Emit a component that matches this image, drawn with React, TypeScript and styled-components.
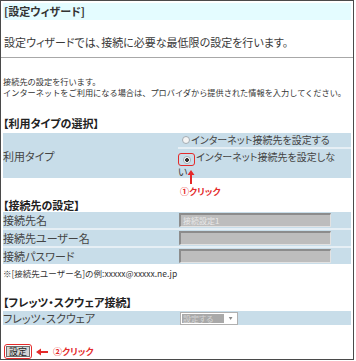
import styled, { createGlobalStyle } from "styled-components";

const GlobalStyle = createGlobalStyle`
  html, body {
    margin: 0;
    padding: 0;
    background: #fff;
  }
  body {
    font-family: "Noto Sans CJK JP", "Noto Sans", sans-serif;
    font-feature-settings: "palt";
    color: #3a3a3a;
  }
`;

const Frame = styled.div`
  position: relative;
  width: 354px;
  height: 360px;
  box-sizing: border-box;
  border: 1px solid #4a4a4a;
  padding: 2px 2px 0 2px;
  overflow: hidden;
`;

const TitleBar = styled.div`
  height: 17px;
  line-height: 17px;
  background: #e4fcff;
  font-size: 11px;
  font-weight: bold;
  color: #333;
  padding-left: 1px;
`;

const Lead = styled.p`
  margin: 15px 0 0;
  font-size: 11px;
  line-height: 14px;
  padding-left: 1px;
`;

const Rule = styled.hr`
  margin: 8px -2px 0;
  border: 0;
  height: 1px;
  background: #a8a8a8;
`;

const Intro = styled.p`
  margin: 18px 0 0;
  font-size: 8.2px;
  line-height: 11px;
  font-feature-settings: normal;
  color: #333;
`;

const SectionTitle = styled.h3<{ $top: number }>`
  margin: ${(p) => p.$top}px 0 0;
  font-size: 11px;
  line-height: 13px;
  font-weight: bold;
  color: #222;
`;

const FormGrid = styled.div<{ $rows: string; $top: number }>`
  position: relative;
  display: grid;
  grid-template-columns: 175px 1fr;
  grid-template-rows: ${(p) => p.$rows};
  row-gap: 2px;
  margin-top: ${(p) => p.$top}px;
  background: #e6eff5;
`;

const Label = styled.div<{ $span?: number }>`
  grid-row: ${(p) => (p.$span ? `span ${p.$span}` : "auto")};
  display: flex;
  align-items: center;
  background: #c8dde9;
  font-size: 11px;
  color: #444;
`;

const Value = styled.div<{ $wrap?: boolean }>`
  display: ${(p) => (p.$wrap ? "block" : "flex")};
  align-items: center;
  background: #c8dde9;
  font-size: 10px;
  line-height: 12px;
  padding: ${(p) => (p.$wrap ? "2px 12px 0 0" : "0 4px 0 0")};
  color: #444;
`;

const Radio = styled.span<{ $checked?: boolean }>`
  display: inline-block;
  box-sizing: border-box;
  width: 8px;
  height: 8px;
  border-radius: 50%;
  border: 1px solid #a3acb3;
  background: ${(p) =>
    p.$checked
      ? "radial-gradient(circle, #333 0 1.6px, #fff 2.2px)"
      : "#f4f4f4"};
  vertical-align: -1px;
  margin: 0 1px 0 4px;
`;

const Marked = styled.span`
  display: inline-block;
  border: 1.5px solid #e42a2a;
  border-radius: 3px;
  padding: 1px 2px 1px 0;
  line-height: 8px;
  margin-right: 1px;
  vertical-align: -2px;
`;

const Callout = styled.div`
  position: relative;
  margin-top: 9px;
  padding-left: 177px;
  font-size: 9px;
  line-height: 10px;
  font-weight: bold;
  color: #e42a2a;
`;

const UpArrow = styled.svg`
  position: absolute;
  left: 184px;
  top: -18px;
`;

const TextBox = styled.div`
  box-sizing: border-box;
  width: 152px;
  height: 14px;
  margin-left: 1px;
  background: #bdbdbd;
  border-top: 2px solid #8c8c8c;
  border-left: 2px solid #8c8c8c;
  border-right: 1px solid #e2e2e2;
  border-bottom: 1px solid #e2e2e2;
  font-size: 8px;
  line-height: 11px;
  color: #e8e8e8;
  padding-left: 2px;
`;

const Note = styled.div`
  margin-top: 4px;
  font-size: 8.5px;
  line-height: 10px;
  font-feature-settings: normal;
  color: #333;
`;

const SelectBox = styled.div`
  display: flex;
  align-items: center;
  box-sizing: border-box;
  width: 58px;
  height: 13px;
  margin-left: 2px;
  background: #fff;
  border: 1px solid #b0b0b0;
`;

const SelectText = styled.span`
  width: 43px;
  height: 9px;
  margin-left: 1px;
  background: #a9a9a9;
  color: #d6d6d6;
  font-size: 8px;
  line-height: 9px;
  padding-left: 1px;
`;

const Footer = styled.div`
  display: flex;
  align-items: center;
  margin-top: 19px;
  padding-left: 1px;
  gap: 3px;
  font-size: 9px;
  font-weight: bold;
  color: #e42a2a;
`;

const ButtonRing = styled.span`
  display: inline-flex;
  border: 1.5px solid #e42a2a;
  border-radius: 3px;
  padding: 1px;
`;

const Button = styled.button`
  font-family: inherit;
  font-size: 9px;
  line-height: 9px;
  height: 11px;
  padding: 0 2px;
  background: #d4d4d4;
  border: 1px solid #6e6e6e;
  color: #222;
`;

const LeftArrow = styled.svg`
  margin: 0 2px 0 1px;
`;

export default function App() {
  return (
    <>
      <GlobalStyle />
      <Frame>
        <TitleBar>[設定ウィザード]</TitleBar>
        <Lead>設定ウィザードでは、接続に必要な最低限の設定を行います。</Lead>
        <Rule />
        <Intro>
          接続先の設定を行います。
          <br />
          インターネットをご利用になる場合は、プロバイダから提供された情報を入力してください。
        </Intro>

        <SectionTitle $top={19}>【利用タイプの選択】</SectionTitle>
        <FormGrid $rows="14px 29px" $top={3}>
          <Label $span={2}>利用タイプ</Label>
          <Value>
            <Radio />
            インターネット接続先を設定する
          </Value>
          <Value $wrap>
            <Marked>
              <Radio $checked />
            </Marked>
            インターネット接続先を設定しない
          </Value>
        </FormGrid>
        <Callout>
          <UpArrow width="8" height="15" viewBox="0 0 8 15">
            <path d="M4 1 L7.5 6 L5 6 L5 15 L3 15 L3 6 L0.5 6 Z" fill="#e42a2a" />
          </UpArrow>
          ①クリック
        </Callout>

        <SectionTitle $top={2}>【接続先の設定】</SectionTitle>
        <FormGrid $rows="16px 16px 16px" $top={0}>
          <Label>接続先名</Label>
          <Value>
            <TextBox>接続設定1</TextBox>
          </Value>
          <Label>接続先ユーザー名</Label>
          <Value>
            <TextBox />
          </Value>
          <Label>接続パスワード</Label>
          <Value>
            <TextBox />
          </Value>
        </FormGrid>
        <Note>※[接続先ユーザー名]の例:xxxxx@xxxxx.ne.jp</Note>

        <SectionTitle $top={18}>【フレッツ・スクウェア接続】</SectionTitle>
        <FormGrid $rows="14px" $top={2}>
          <Label>フレッツ・スクウェア</Label>
          <Value>
            <SelectBox>
              <SelectText>設定する</SelectText>
              <svg width="14" height="9" viewBox="0 0 14 9">
                <path d="M5 3 L9 3 L7 6 Z" fill="#8a8a8a" />
              </svg>
            </SelectBox>
          </Value>
        </FormGrid>

        <Footer>
          <ButtonRing>
            <Button>設定</Button>
          </ButtonRing>
          <LeftArrow width="12" height="8" viewBox="0 0 12 8">
            <path d="M0 4 L5 0.5 L5 3 L12 3 L12 5 L5 5 L5 7.5 Z" fill="#e42a2a" />
          </LeftArrow>
          ②クリック
        </Footer>
      </Frame>
    </>
  );
}
